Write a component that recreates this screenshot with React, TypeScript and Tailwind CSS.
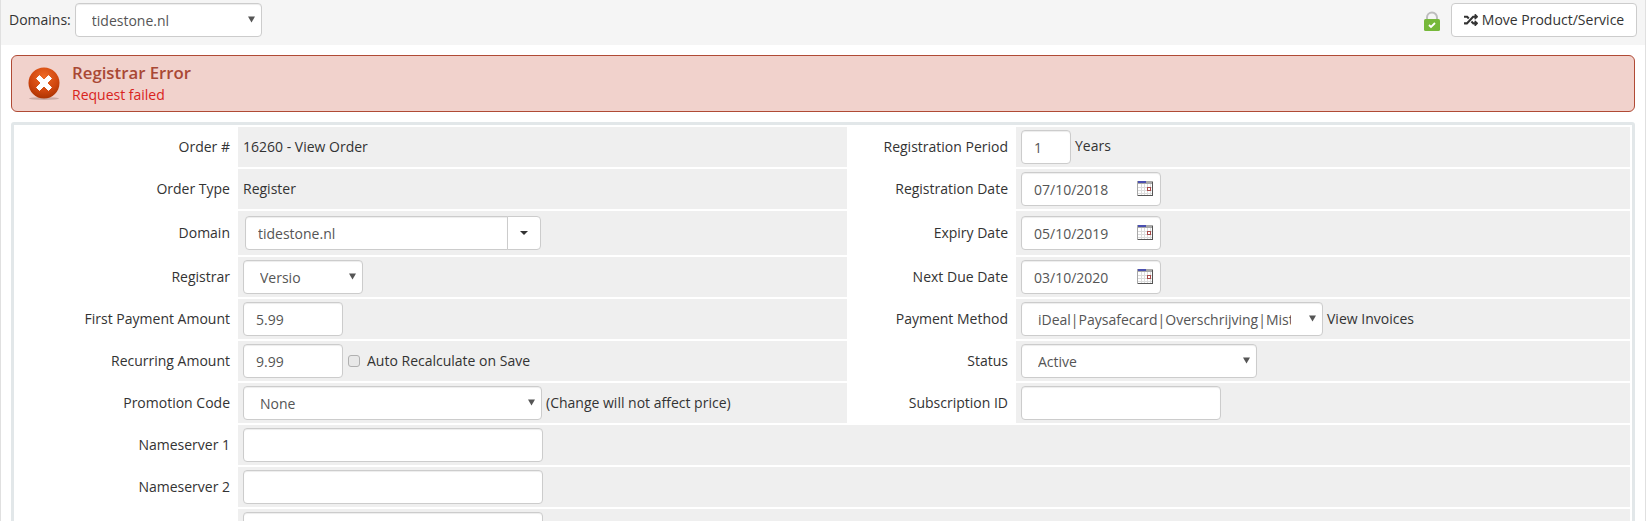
import React from 'react';
import { FaRandom } from 'react-icons/fa';

const controlClass =
    'h-[34px] bg-white border border-[#ccc] rounded-[4px] text-[14px] text-[#555] shadow-[inset_0_1px_1px_rgba(0,0,0,0.075)] outline-none';

function Select({ value, options, width }: { value: string; options?: string[]; width: string }) {
    return (
        <div className={`relative ${width}`}>
            <select
                defaultValue={value}
                className={`${controlClass} w-full appearance-none pl-[16px] pr-[31px]`}
            >
                {(options ?? [value]).map((o) => (
                    <option key={o}>{o}</option>
                ))}
            </select>
            <svg className="absolute right-[7px] top-[13px]" width="7" height="7" viewBox="0 0 7 7">
                <path d="M0 0.5h7L3.5 6.5z" fill="#555" />
            </svg>
        </div>
    );
}

function Input({ value, width }: { value?: string; width: string }) {
    return <input type="text" defaultValue={value} className={`${controlClass} ${width} px-[12px]`} />;
}

function CalendarIcon() {
    return (
        <svg className="absolute right-[8px] top-[9px]" width="16" height="15" viewBox="0 0 16 15" shapeRendering="crispEdges">
            <rect x="0" y="0" width="16" height="15" fill="#a8a8a8" />
            <rect x="1" y="14" width="15" height="1" fill="#555" />
            <rect x="15" y="1" width="1" height="14" fill="#555" />
            <rect x="1" y="3" width="14" height="11" fill="#fff" />
            <rect x="1" y="0" width="8" height="2" fill="#4a4fb0" />
            <path d="M1 6.5h14M1 9.5h14M1 12.5h14M4.5 3v11M7.5 3v11M10.5 3v11M13.5 3v11" stroke="#dcdcdc" strokeWidth="1" fill="none" />
            <rect x="10.5" y="6.5" width="3" height="3" fill="#fff" stroke="#a84a4a" strokeWidth="1" />
        </svg>
    );
}

function DateInput({ value }: { value: string }) {
    return (
        <div className="relative w-[140px]">
            <Input value={value} width="w-full" />
            <CalendarIcon />
        </div>
    );
}

function Label({ children }: { children?: React.ReactNode }) {
    return <div className="flex items-center justify-end pr-[8px] pb-[2px] text-[14px] text-[#333]">{children}</div>;
}

function Field({ children, wide }: { children?: React.ReactNode; wide?: boolean }) {
    return (
        <div className={`flex items-center gap-[5px] bg-[#efefef] pl-[5px] text-[14px] text-[#333] ${wide ? 'col-span-3' : ''}`}>
            {children}
        </div>
    );
}

function ErrorIcon() {
    return (
        <svg width="34" height="34" viewBox="0 0 34 34" className="shrink-0">
            <defs>
                <radialGradient id="errBall" cx="50%" cy="30%" r="75%">
                    <stop offset="0%" stopColor="#ee6a26" />
                    <stop offset="60%" stopColor="#d0460e" />
                    <stop offset="100%" stopColor="#a53000" />
                </radialGradient>
            </defs>
            <ellipse cx="17" cy="31.5" rx="15" ry="1.5" fill="#b09088" opacity="0.6" />
            <circle cx="17" cy="16" r="15.5" fill="url(#errBall)" />
            <path d="M9.5 11.5l3-3 4.5 4.5 4.5-4.5 3 3-4.5 4.5 4.5 4.5-3 3-4.5-4.5-4.5 4.5-3-3 4.5-4.5z" fill="#fff" stroke="#fff" strokeWidth="1" strokeLinejoin="round" />
        </svg>
    );
}

function LockIcon() {
    return (
        <svg width="16" height="20" viewBox="0 0 16 20">
            <path d="M3 9V6.5a5 5 0 0 1 10 0V9" fill="none" stroke="#bdbdbd" strokeWidth="2" />
            <rect x="0" y="8" width="16" height="12" rx="1.5" fill="#76b83a" />
            <path d="M5 14l2 2 4-4" fill="none" stroke="#fff" strokeWidth="1.8" />
        </svg>
    );
}

export default function App() {
    return (
        <div className="h-[521px] overflow-hidden bg-white font-['Open_Sans',sans-serif]">
            <div className="h-full w-[1646px] border-x border-[#e0e0e0]">
                {/* Top bar */}
                <div className="flex h-[45px] items-start justify-between bg-[#f5f5f5] pt-[3px] pl-[8px] pr-[8px]">
                    <div className="flex items-center gap-[4px] text-[14px] text-[#333]">
                        <span className="pb-[2px]">Domains:</span>
                        <Select value="tidestone.nl" width="w-[187px]" />
                    </div>
                    <div className="flex items-center gap-[11px]">
                        <div className="pt-[1px]">
                            <LockIcon />
                        </div>
                        <button className="flex h-[34px] w-[186px] items-center justify-center gap-[4px] rounded-[4px] border border-[#ccc] bg-white pb-[1px] text-[14px] text-[#333]">
                            <FaRandom className="text-[14px]" />
                            Move Product/Service
                        </button>
                    </div>
                </div>

                <div className="px-[10px] pt-[10px]">
                    {/* Error */}
                    <div className="flex h-[57px] items-center gap-[11px] rounded-[6px] border border-[#b04a35] bg-[#f1d2cc] pl-[15px]">
                        <ErrorIcon />
                        <div>
                            <div className="text-[16.8px] leading-[20px] font-semibold text-[#a94834]">Registrar Error</div>
                            <div className="mt-[2px] text-[14px] leading-[20px] text-[#d9231c]">Request failed</div>
                        </div>
                    </div>

                    {/* Form */}
                    <div className="mt-[10px] rounded-[3px] border-[3px] border-[#e2e7e9] p-[2px]">
                        <div className="grid grid-cols-[222px_609px_169px_614px] grid-rows-[40px_40px_44px_40px_40px_40px_40px_40px_40px_40px] gap-y-[2px]">
                            <Label>Order #</Label>
                            <Field>
                                <span className="pb-[2px]">16260 - View Order</span>
                            </Field>
                            <Label>Registration Period</Label>
                            <Field>
                                <Input value="1" width="w-[50px]" />
                                <span className="-ml-px pb-[4px]">Years</span>
                            </Field>

                            <Label>Order Type</Label>
                            <Field>
                                <span className="pb-[2px]">Register</span>
                            </Field>
                            <Label>Registration Date</Label>
                            <Field>
                                <DateInput value="07/10/2018" />
                            </Field>

                            <Label>Domain</Label>
                            <div className="flex items-center bg-[#efefef] pl-[7px]">
                                <input
                                    type="text"
                                    defaultValue="tidestone.nl"
                                    className={`${controlClass} w-[263px] rounded-r-none px-[12px]`}
                                />
                                <button className="-ml-px flex h-[34px] w-[34px] items-center justify-center rounded-r-[4px] border border-[#ccc] bg-white">
                                    <svg width="8" height="4" viewBox="0 0 8 4">
                                        <path d="M0 0h8L4 4z" fill="#333" />
                                    </svg>
                                </button>
                            </div>
                            <Label>Expiry Date</Label>
                            <Field>
                                <DateInput value="05/10/2019" />
                            </Field>

                            <Label>Registrar</Label>
                            <Field>
                                <Select value="Versio" width="w-[120px]" />
                            </Field>
                            <Label>Next Due Date</Label>
                            <Field>
                                <DateInput value="03/10/2020" />
                            </Field>

                            <Label>First Payment Amount</Label>
                            <Field>
                                <Input value="5.99" width="w-[100px]" />
                            </Field>
                            <Label>Payment Method</Label>
                            <Field>
                                <Select value="iDeal|Paysafecard|Overschrijving|Mister Cash" width="w-[302px]" />
                                <span className="-ml-px pb-[1px]">View Invoices</span>
                            </Field>

                            <Label>Recurring Amount</Label>
                            <Field>
                                <Input value="9.99" width="w-[100px]" />
                                <input
                                    type="checkbox"
                                    className="h-[12px] w-[12px] appearance-none rounded-[3px] border border-[#b0b0b0] bg-[#e8e8e8]"
                                />
                                <span className="ml-[2px] pb-[1px]">Auto Recalculate on Save</span>
                            </Field>
                            <Label>Status</Label>
                            <Field>
                                <Select value="Active" width="w-[236px]" />
                            </Field>

                            <Label>Promotion Code</Label>
                            <Field>
                                <Select value="None" width="w-[299px]" />
                                <span className="-ml-px pb-[1px]">(Change will not affect price)</span>
                            </Field>
                            <Label>Subscription ID</Label>
                            <Field>
                                <Input width="w-[200px]" />
                            </Field>

                            <Label>Nameserver 1</Label>
                            <Field wide>
                                <Input width="w-[300px]" />
                            </Field>

                            <Label>Nameserver 2</Label>
                            <Field wide>
                                <Input width="w-[300px]" />
                            </Field>

                            <Label></Label>
                            <Field wide>
                                <Input width="w-[300px]" />
                            </Field>
                        </div>
                    </div>
                </div>
            </div>
        </div>
    );
}
